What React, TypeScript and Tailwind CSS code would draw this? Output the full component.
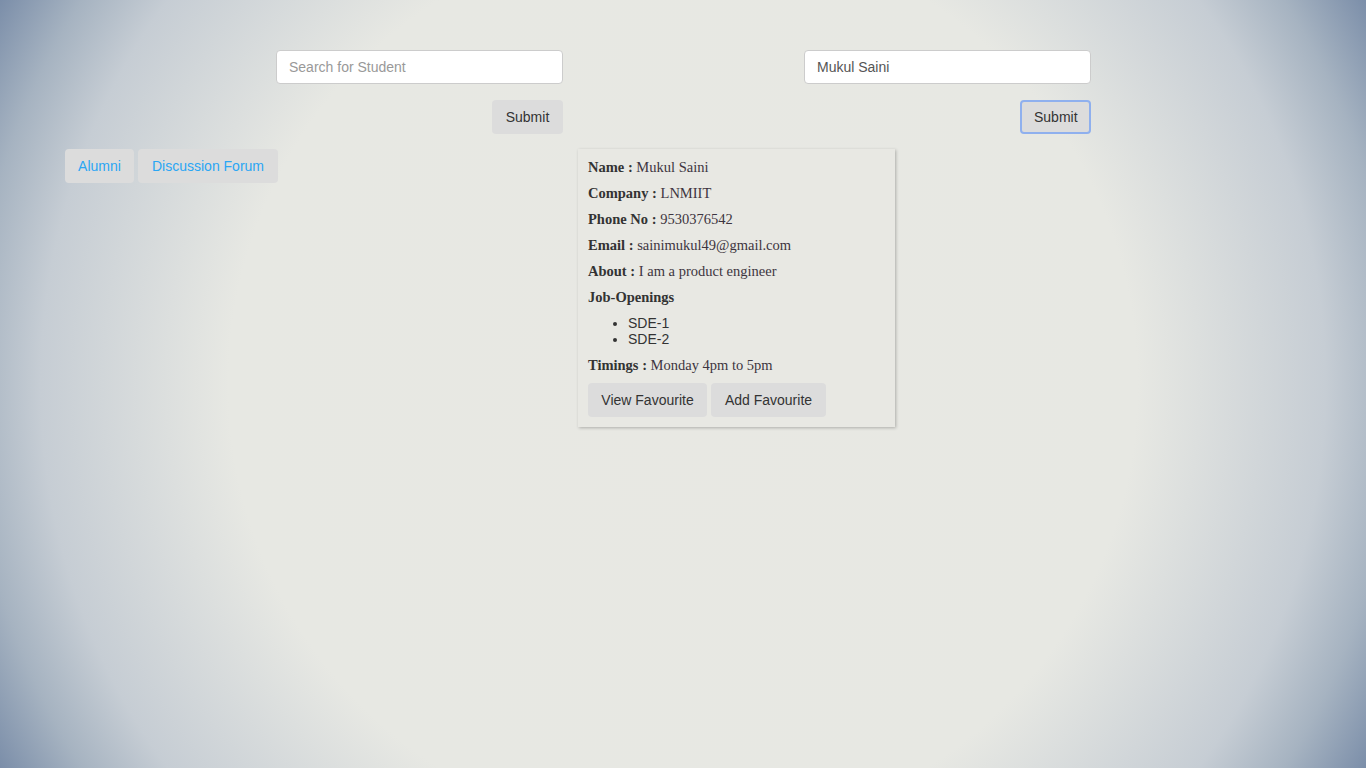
const sans = "font-['Liberation_Sans',Arial,sans-serif]";
const serif = "font-['Liberation_Serif','Times_New_Roman',serif]";

function GreyButton({
  children,
  className = "",
  textClass = "text-[#333]",
  borderClass = "border border-transparent",
}: {
  children: React.ReactNode;
  className?: string;
  textClass?: string;
  borderClass?: string;
}) {
  return (
    <button
      type="button"
      className={`h-[34px] rounded-[4px] bg-[#dcdcdc] px-3 text-[14px] leading-5 ${borderClass} ${textClass} ${sans} ${className}`}
    >
      {children}
    </button>
  );
}

function SearchForm({
  value,
  placeholder,
  focused,
}: {
  value?: string;
  placeholder?: string;
  focused?: boolean;
}) {
  return (
    <div className="flex w-[287px] flex-col items-end">
      <input
        readOnly
        value={value}
        placeholder={placeholder}
        className={`h-[34px] w-full rounded-[4px] border border-[#ccc] bg-white px-3 text-[14px] text-[#555] placeholder:text-[#999] outline-none ${sans}`}
      />
      <GreyButton
        className="mt-4 w-[71px]"
        borderClass={
          focused
            ? "border-2 border-[#8fb0ee]"
            : "border border-transparent"
        }
      >
        Submit
      </GreyButton>
    </div>
  );
}

function Field({ label, value }: { label: string; value: string }) {
  return (
    <p className="mb-[10px] leading-4">
      <b className="font-bold text-[#333]">{label} : </b>
      <span className="text-[#3d3540]">{value}</span>
    </p>
  );
}

function ProfileCard() {
  return (
    <div
      className={`w-[317px] bg-[#e8e8e3] p-[10px] text-[14.5px] shadow-[1px_1px_3px_rgba(0,0,0,0.25)] ${serif}`}
    >
      <Field label="Name" value="Mukul Saini" />
      <Field label="Company" value="LNMIIT" />
      <Field label="Phone No" value="9530376542" />
      <Field label="Email" value="sainimukul49@gmail.com" />
      <Field label="About" value="I am a product engineer" />
      <p className="mb-[10px] font-bold leading-4 text-[#333]">Job-Openings</p>
      <ul
        className={`mb-[10px] list-disc pl-10 text-[14px] leading-4 text-[#333] ${sans}`}
      >
        <li>SDE-1</li>
        <li>SDE-2</li>
      </ul>
      <Field label="Timings" value="Monday 4pm to 5pm" />
      <div className="flex gap-1">
        <GreyButton className="h-[33px] w-[119px]">View Favourite</GreyButton>
        <GreyButton className="h-[33px] w-[115px]">Add Favourite</GreyButton>
      </div>
    </div>
  );
}

export default function App() {
  return (
    <div className="min-h-[768px] w-full bg-[radial-gradient(circle_farthest-corner_at_50%_50%,#e8e8e3_0%,#e7e8e3_58%,#c6cdd4_82%,#a6b3c1_91%,#7b8ea9_100%)] pt-[50px]">
      <div className="flex gap-[241px] pl-[276px]">
        <SearchForm placeholder="Search for Student" />
        <SearchForm value="Mukul Saini" focused />
      </div>
      <div className="mt-[15px] flex pl-[65px]">
        <div className="flex w-[513px] items-start gap-1">
          <GreyButton className="w-[69px]" textClass="text-[#2aa6f4]">
            Alumni
          </GreyButton>
          <GreyButton className="w-[140px]" textClass="text-[#2aa6f4]">
            Discussion Forum
          </GreyButton>
        </div>
        <ProfileCard />
      </div>
    </div>
  );
}
